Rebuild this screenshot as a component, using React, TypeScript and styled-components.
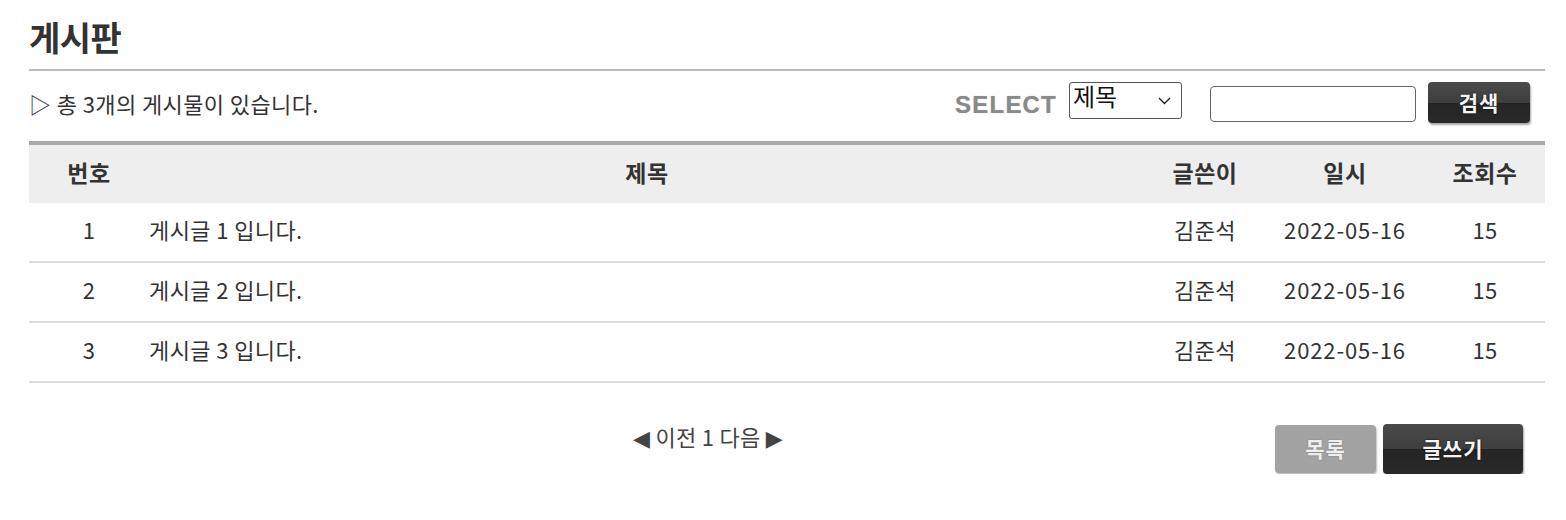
import React from "react";
import styled, { createGlobalStyle } from "styled-components";

const GlobalStyle = createGlobalStyle`
  html, body { margin: 0; padding: 0; background: #fff; }
  body {
    font-family: "Noto Sans CJK KR", "Noto Sans", sans-serif;
    color: #333;
  }
  * { box-sizing: border-box; }
`;

const Page = styled.div`
  width: 1516px;
  margin-left: 29px;
`;

const Title = styled.h1`
  margin: 0;
  height: 71px;
  padding-top: 15px;
  font-size: 34px;
  line-height: 44px;
  font-weight: 700;
  color: #333;
  letter-spacing: -0.5px;
  border-bottom: 2px solid #bbb;
`;

const InfoBar = styled.div`
  display: flex;
  align-items: flex-start;
  height: 70px;
  padding-right: 15px;
`;

const Count = styled.div`
  flex: 1;
  font-size: 22px;
  line-height: 30px;
  letter-spacing: 0.4px;
  color: #333;
  margin-top: 17px;
`;

const SearchGroup = styled.div`
  display: flex;
  align-items: flex-start;
`;

const SelectLabel = styled.span`
  font-family: "Liberation Sans", Arial, sans-serif;
  font-weight: 700;
  font-size: 24px;
  line-height: 28px;
  letter-spacing: 1.2px;
  color: #8a8a8a;
  text-shadow: 0 0 1px rgba(120, 120, 120, 0.6);
  margin-right: 12px;
  margin-top: 20px;
`;

const SelectWrap = styled.div`
  position: relative;
  width: 113px;
  height: 37px;
  margin-top: 11px;
  margin-right: 28px;
`;

const Select = styled.select`
  appearance: none;
  width: 100%;
  height: 100%;
  border: 1px solid #555;
  border-radius: 3px;
  background: #fff;
  font-family: "Noto Sans CJK KR", sans-serif;
  font-size: 24px;
  line-height: 26px;
  padding: 0 0 9px 3px;
  color: #111;
`;

const Chevron = styled.svg`
  position: absolute;
  right: 11px;
  top: 15px;
  pointer-events: none;
`;

const SearchInput = styled.input`
  width: 206px;
  height: 36px;
  border: 1px solid #666;
  border-radius: 4px;
  margin-top: 15px;
  margin-right: 12px;
  font-size: 16px;
  padding: 0 6px;
`;

const DarkButton = styled.button<{ $w: number; $h: number }>`
  width: ${(p) => p.$w}px;
  height: ${(p) => p.$h}px;
  border: 0;
  border-radius: 4px;
  background: linear-gradient(#4a4a4a 0%, #3e3e3e 50%, #242424 50%, #2a2a2a 100%);
  box-shadow: 1px 2px 2px rgba(0, 0, 0, 0.35);
  color: #f4f4f4;
  font-family: "Noto Sans CJK KR", sans-serif;
  font-weight: 700;
  font-size: 21px;
  letter-spacing: 1px;
  text-shadow: 0 0 2px rgba(0, 0, 0, 0.9);
  cursor: pointer;
  padding: 0 0 2px;
`;

const SearchButton = styled(DarkButton)`
  margin-top: 11px;
`;

const GreyButton = styled.button`
  width: 101px;
  height: 48px;
  border: 0;
  border-radius: 4px;
  background: #a3a3a3;
  box-shadow: 1px 2px 2px rgba(0, 0, 0, 0.25);
  color: #eeeeee;
  font-family: "Noto Sans CJK KR", sans-serif;
  font-weight: 700;
  font-size: 21px;
  letter-spacing: 1px;
  text-shadow: 0 0 2px rgba(0, 0, 0, 0.25);
  cursor: pointer;
  padding: 0 0 2px;
`;

const Table = styled.table`
  width: 1516px;
  border-collapse: separate;
  border-spacing: 0;
  table-layout: fixed;
`;

const Th = styled.th`
  height: 62px;
  background: #eee;
  border-top: 4px solid #aaa;
  font-size: 23px;
  font-weight: 700;
  letter-spacing: 0.5px;
  color: #333;
  text-align: center;
  padding: 0 0 5px;
`;

const Td = styled.td<{ $left?: boolean; $wide?: boolean }>`
  height: 60px;
  border-bottom: 2px solid #ddd;
  font-size: 22px;
  letter-spacing: ${(p) => (p.$wide ? "0.9px" : "0.4px")};
  color: #333;
  text-align: ${(p) => (p.$left ? "left" : "center")};
  padding: 0 0 7px;
`;

const Footer = styled.div`
  display: flex;
  align-items: flex-start;
  padding-right: 22px;
  margin-top: 41px;
`;

const Pager = styled.div`
  flex: 1;
  padding-left: 112px;
  text-align: center;
  font-size: 22px;
  line-height: 24px;
  letter-spacing: 0.3px;
  color: #444;
`;

const Arrow = styled.span`
  font-family: "DejaVu Sans", sans-serif;
  font-size: 22px;
  color: #444;
`;

const Buttons = styled.div`
  display: flex;
  gap: 7px;
  align-items: center;
`;

const posts = [
  { no: 1, title: "게시글 1 입니다.", author: "김준석", date: "2022-05-16", views: 15 },
  { no: 2, title: "게시글 2 입니다.", author: "김준석", date: "2022-05-16", views: 15 },
  { no: 3, title: "게시글 3 입니다.", author: "김준석", date: "2022-05-16", views: 15 },
];

export default function App() {
  return (
    <>
      <GlobalStyle />
      <Page>
        <Title>게시판</Title>
        <InfoBar>
          <Count>▷ 총 3개의 게시물이 있습니다.</Count>
          <SearchGroup>
            <SelectLabel>SELECT</SelectLabel>
            <SelectWrap>
              <Select defaultValue="title">
                <option value="title">제목</option>
                <option value="author">글쓴이</option>
              </Select>
              <Chevron width="13" height="8" viewBox="0 0 13 8">
                <path d="M1 1 L6.5 6.5 L12 1" fill="none" stroke="#222" strokeWidth="1.4" />
              </Chevron>
            </SelectWrap>
            <SearchInput type="text" />
            <SearchButton $w={102} $h={41}>검색</SearchButton>
          </SearchGroup>
        </InfoBar>
        <Table>
          <colgroup>
            <col style={{ width: 120 }} />
            <col />
            <col style={{ width: 120 }} />
            <col style={{ width: 160 }} />
            <col style={{ width: 120 }} />
          </colgroup>
          <thead>
            <tr>
              <Th>번호</Th>
              <Th>제목</Th>
              <Th>글쓴이</Th>
              <Th>일시</Th>
              <Th>조회수</Th>
            </tr>
          </thead>
          <tbody>
            {posts.map((p) => (
              <tr key={p.no}>
                <Td>{p.no}</Td>
                <Td $left>{p.title}</Td>
                <Td>{p.author}</Td>
                <Td $wide>{p.date}</Td>
                <Td>{p.views}</Td>
              </tr>
            ))}
          </tbody>
        </Table>
        <Footer>
          <Pager>
            <Arrow>◀</Arrow> 이전 1 다음 <Arrow>▶</Arrow>
          </Pager>
          <Buttons>
            <GreyButton>목록</GreyButton>
            <DarkButton $w={140} $h={50}>글쓰기</DarkButton>
          </Buttons>
        </Footer>
      </Page>
    </>
  );
}
